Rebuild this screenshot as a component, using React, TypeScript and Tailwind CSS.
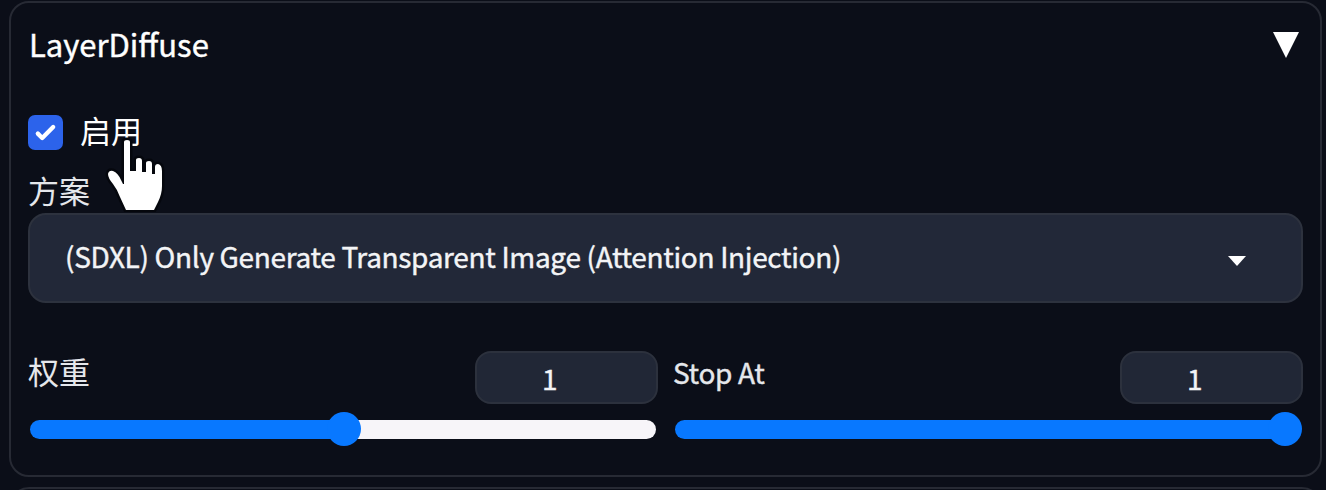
type SliderProps = {
  label: string;
  value: number;
  percent: number;
  labelClass: string;
};

function Slider({ label, value, percent, labelClass }: SliderProps) {
  return (
    <div className="flex flex-1 flex-col">
      <div className="flex h-[53px] items-start justify-between">
        <label className={labelClass}>{label}</label>
        <div className="flex h-[53px] w-[183px] items-center rounded-[16px] border-2 border-[#2c313d] bg-[#212736] pl-[65px] text-[28px] leading-none text-[#f3f4f6] [-webkit-text-stroke:0.4px]">
          <span>{value}</span>
        </div>
      </div>
      <div
        className="relative mx-[2px] mt-[16px] h-[19px] rounded-full"
        style={{
          background: `linear-gradient(to right, #0878ff ${percent}%, #f7f5f9 ${percent}%)`,
        }}
      >
        <div
          className="absolute top-[-8px] size-[34px] rounded-full bg-[#0878ff]"
          style={{ left: `calc((100% - 33px) * ${percent / 100})` }}
        />
      </div>
    </div>
  );
}

export default function App() {
  return (
    <div className="flex h-[490px] w-[1326px] flex-col gap-[10px] overflow-hidden bg-[#0b0e18] pt-px pr-[4px] pl-[9px] font-['Noto_Sans_CJK_SC','Noto_Sans',sans-serif] text-white">
      <section className="relative flex h-[476px] shrink-0 flex-col rounded-[20px] border-2 border-[#272a34] pr-[17px] pl-[17px]">
        <header className="flex h-[84px] items-center justify-between">
          <h2 className="mt-[-2px] ml-px text-[31px] leading-[40px] [-webkit-text-stroke:0.4px]">LayerDiffuse</h2>
          <svg className="mr-[4px] h-[26px] w-[26px]" viewBox="0 0 26 26" fill="currentColor">
            <path d="M0 0H26L13 26Z" />
          </svg>
        </header>

        <div className="mt-[28px] flex h-[35px] items-center gap-[17px]">
          <span className="flex size-[35px] items-center justify-center rounded-[7px] bg-[#2c63eb]">
            <svg className="size-[35px]" viewBox="0 0 16 16" fill="white">
              <path d="M12.207 4.793a1 1 0 010 1.414l-5 5a1 1 0 01-1.414 0l-2-2a1 1 0 011.414-1.414L6.5 9.086l4.293-4.293a1 1 0 011.414 0z" />
            </svg>
          </span>
          <span className="mt-[-6px] text-[31px] leading-[35px]">启用</span>
        </div>

        <label className="mt-[20px] h-[43px] text-[31px] leading-[40px] text-[#e5e7eb]">方案</label>

        <div className="flex h-[90px] items-center justify-between rounded-[18px] border-2 border-[#2d323e] bg-[#222838] pr-[55px] pl-[35px]">
          <span className="mt-[-4px] text-[28px] leading-[40px] tracking-[-0.33px] text-[#f3f4f6] [-webkit-text-stroke:0.4px]">
            (SDXL) Only Generate Transparent Image (Attention Injection)
          </span>
          <svg className="mt-[5px] h-[10px] w-[18px]" viewBox="0 0 18 10" fill="currentColor">
            <path d="M0 0H18L9 10Z" />
          </svg>
        </div>

        <div className="mt-[48px] flex gap-[15px]">
          <Slider label="权重" value={1} percent={50} labelClass="text-[31px] leading-[40px] text-[#e5e7eb]" />
          <Slider label="Stop At" value={1} percent={100} labelClass="text-[28px] leading-[42px] tracking-[-0.33px] text-[#e5e7eb] [-webkit-text-stroke:0.4px]" />
        </div>

        <svg className="absolute top-[133px] left-[94px] h-[76px] w-[60px]" viewBox="0 0 60 76">
          <path
            d="M19 6Q19 4 22 4Q25 4 25 6V35H31V24Q31 22 34 22Q37 22 37 25V36H41V27Q41 25 44 25Q47 25 47 28V38H50V31Q50 28 53 28Q57 29 57 35V50Q57 58 53 66L49 74H21L15 61Q12 53 8 48Q3 42 3 38Q4 34 8 35Q13 37 16 44L18 48H19Z"
            fill="white"
            stroke="#05070d"
            strokeWidth="5"
            strokeLinejoin="round"
            paintOrder="stroke"
          />
        </svg>
      </section>
      <section className="h-[60px] shrink-0 rounded-[20px] border-2 border-[#272a34]" />
    </div>
  );
}
